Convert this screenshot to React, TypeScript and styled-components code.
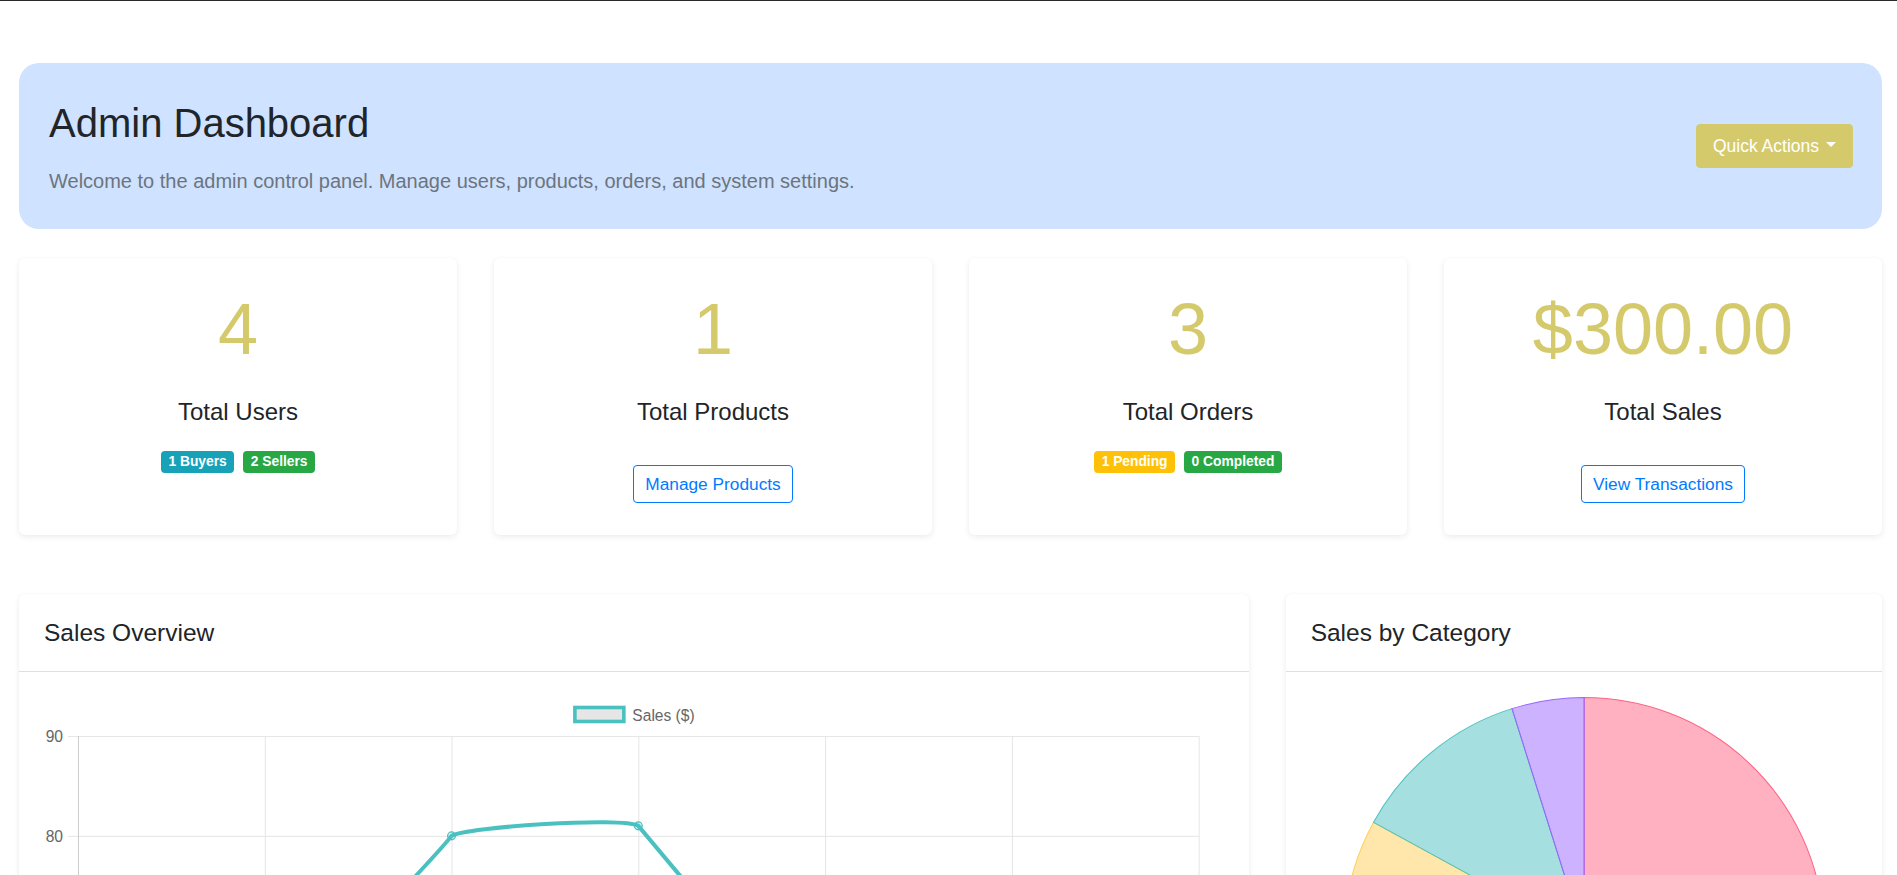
import React from "react";
import styled, { createGlobalStyle } from "styled-components";

const GlobalStyle = createGlobalStyle`
  *, *::before, *::after { box-sizing: border-box; }
  html, body { margin: 0; padding: 0; background: #ffffff; }
  body {
    font-family: "Liberation Sans", Arial, Helvetica, sans-serif;
    color: #212529;
    -webkit-font-smoothing: antialiased;
  }
`;

const OLIVE = "#d5ca6b";

const TopRule = styled.div`
  height: 1px;
  background: #2a2a2a;
`;

const Page = styled.main`
  padding: 62px 15px 40px 19px;
  display: flex;
  flex-direction: column;
`;

const Banner = styled.section`
  display: flex;
  align-items: center;
  justify-content: space-between;
  background: #cfe2ff;
  border-radius: 20px;
  padding: 36px 29px 33px 30px;
`;

const BannerText = styled.div`
  display: flex;
  flex-direction: column;
`;

const Title = styled.h1`
  margin: 0 0 19px;
  font-size: 40px;
  font-weight: 400;
  line-height: 48px;
  color: #212529;
`;

const Lead = styled.p`
  margin: 0;
  font-size: 20px;
  line-height: 30px;
  color: #6c757d;
`;

const DropdownButton = styled.button`
  font-family: inherit;
  font-size: 17.5px;
  line-height: 26px;
  padding: 8px 16px;
  margin-bottom: 4px;
  color: #ffffff;
  background: ${OLIVE};
  border: 1px solid ${OLIVE};
  border-radius: 4px;
  display: inline-flex;
  align-items: center;
  cursor: pointer;
  &::after {
    content: "";
    display: inline-block;
    margin-left: 7px;
    border-top: 5.5px solid #ffffff;
    border-left: 5px solid transparent;
    border-right: 5px solid transparent;
    transform: translateY(-1px);
  }
`;

const Grid = styled.div<{ $top: number }>`
  display: grid;
  grid-template-columns: repeat(12, minmax(0, 1fr));
  column-gap: 37px;
  margin-top: ${(p) => p.$top}px;
`;

const Col = styled.div<{ $span: number }>`
  grid-column: span ${(p) => p.$span};
  display: flex;
  min-width: 0;
`;

const StatCard = styled.div`
  flex: 1;
  background: #ffffff;
  border-radius: 6px;
  box-shadow: 0 2px 6px rgba(0, 0, 0, 0.08), 0 0 1px rgba(0, 0, 0, 0.04);
  padding: 28px 20px 32px;
  display: flex;
  flex-direction: column;
  align-items: center;
  text-align: center;
`;

const StatValue = styled.div`
  font-size: 72px;
  font-weight: 300;
  line-height: 86px;
  color: ${OLIVE};
  margin-bottom: 25px;
`;

const StatLabel = styled.h4`
  margin: 0;
  font-size: 24px;
  font-weight: 400;
  line-height: 29px;
  color: #212529;
`;

const StatFooter = styled.div<{ $top: number }>`
  margin-top: ${(p) => p.$top}px;
  display: flex;
  gap: 9px;
  justify-content: center;
`;

const Badge = styled.span<{ $bg: string }>`
  display: inline-block;
  background: ${(p) => p.$bg};
  color: #ffffff;
  font-size: 13.8px;
  font-weight: 700;
  line-height: 14px;
  padding: 4px 7.5px;
  border-radius: 4px;
`;

const OutlineButton = styled.button`
  font-family: inherit;
  font-size: 17.3px;
  line-height: 24px;
  padding: 6px 11px;
  color: #007bff;
  background: transparent;
  border: 1px solid #007bff;
  border-radius: 4px;
  cursor: pointer;
`;

const Panel = styled.div`
  flex: 1;
  background: #ffffff;
  border-radius: 6px;
  box-shadow: 0 2px 6px rgba(0, 0, 0, 0.08), 0 0 1px rgba(0, 0, 0, 0.04);
  display: flex;
  flex-direction: column;
  min-width: 0;
`;

const PanelHeader = styled.div`
  padding: 24px 25px 24px;
  border-bottom: 1px solid #dfdfdf;
`;

const PanelTitle = styled.h5`
  margin: 0;
  font-size: 24.5px;
  font-weight: 400;
  line-height: 29px;
  color: #212529;
`;

const PanelBody = styled.div`
  padding: 25px;
`;

const ChartSvg = styled.svg`
  display: block;
  width: 100%;
  height: auto;
  font-family: "Liberation Sans", Arial, Helvetica, sans-serif;
`;

const TEAL = "rgb(75,192,192)";

function LineChart() {
  const xs = [34, 221, 408, 595, 782, 969, 1156];
  const gridYs = [39, 139, 239, 339, 439];
  const labels = ["90", "80", "70", "60", "50"];
  const pts: [number, number][] = [
    [34, 299],
    [221, 336],
    [408, 139],
    [595, 129],
    [782, 353],
    [969, 329],
    [1156, 281],
  ];
  const path =
    "M34,299 C70,299 190,344 221,336 C240,319 393,159 408,139 C423,130 580,120 595,129 C610,147 767,334 782,353 C810,361 940,334 969,329 C1000,321 1120,289 1156,281";
  return (
    <ChartSvg viewBox="0 0 1181 460" width="1181" height="460">
      <rect x={531.5} y={10.5} width={49} height={14} fill="#e6e6e6" stroke={TEAL} strokeWidth={3.6} />
      <text x={589} y={24} fontSize={15.6} fill="#666666">
        Sales ($)
      </text>
      {gridYs.map((y, i) => (
        <g key={y}>
          <line x1={24} x2={1156} y1={y + 0.5} y2={y + 0.5} stroke="#e5e5e5" strokeWidth={1} />
          <text x={19} y={y + 6} fontSize={15.6} fill="#666666" textAnchor="end">
            {labels[i]}
          </text>
        </g>
      ))}
      {xs.map((x, i) => (
        <line
          key={x}
          x1={x + 0.5}
          x2={x + 0.5}
          y1={39}
          y2={460}
          stroke={i === 0 ? "#cccccc" : "#e5e5e5"}
          strokeWidth={1}
        />
      ))}
      <path d={path} fill="none" stroke={TEAL} strokeWidth={4} strokeLinejoin="round" />
      {pts.map(([x, y]) => (
        <circle key={x} cx={x} cy={y} r={3.9} fill="rgba(75,192,192,0.25)" stroke={TEAL} strokeWidth={1.3} />
      ))}
    </ChartSvg>
  );
}

const SLICES = [
  { from: 0, to: 172, fill: "rgba(255,99,132,0.5)", stroke: "rgb(255,99,132)" },
  { from: 172, to: 250, fill: "rgba(54,162,235,0.5)", stroke: "rgb(54,162,235)" },
  { from: 250, to: 298.7, fill: "rgba(255,206,86,0.5)", stroke: "rgb(255,206,86)" },
  { from: 298.7, to: 342.5, fill: "rgba(75,192,192,0.5)", stroke: "rgb(75,192,192)" },
  { from: 342.5, to: 360, fill: "rgba(153,102,255,0.5)", stroke: "rgb(153,102,255)" },
];

function slicePath(cx: number, cy: number, r: number, a0: number, a1: number) {
  const p = (a: number) => {
    const rad = (a * Math.PI) / 180;
    return [cx + r * Math.sin(rad), cy - r * Math.cos(rad)];
  };
  const [x0, y0] = p(a0);
  const [x1, y1] = p(a1);
  const large = a1 - a0 > 180 ? 1 : 0;
  return `M${cx},${cy} L${x0.toFixed(2)},${y0.toFixed(2)} A${r},${r} 0 ${large} 1 ${x1.toFixed(2)},${y1.toFixed(2)} Z`;
}

function PieChart() {
  const cx = 273;
  const cy = 240.5;
  const r = 240;
  return (
    <ChartSvg viewBox="0 0 546 484" width="546" height="484">
      {SLICES.map((s) => (
        <path key={s.from} d={slicePath(cx, cy, r, s.from, s.to)} fill={s.fill} stroke={s.stroke} strokeWidth={1} />
      ))}
    </ChartSvg>
  );
}

export default function App() {
  return (
    <>
      <GlobalStyle />
      <TopRule />
      <Page>
        <Banner>
          <BannerText>
            <Title>Admin Dashboard</Title>
            <Lead>Welcome to the admin control panel. Manage users, products, orders, and system settings.</Lead>
          </BannerText>
          <DropdownButton type="button">Quick Actions</DropdownButton>
        </Banner>

        <Grid $top={29}>
          <Col $span={3}>
            <StatCard>
              <StatValue>4</StatValue>
              <StatLabel>Total Users</StatLabel>
              <StatFooter $top={25}>
                <Badge $bg="#17a2b8">1 Buyers</Badge>
                <Badge $bg="#28a745">2 Sellers</Badge>
              </StatFooter>
            </StatCard>
          </Col>
          <Col $span={3}>
            <StatCard>
              <StatValue>1</StatValue>
              <StatLabel>Total Products</StatLabel>
              <StatFooter $top={39}>
                <OutlineButton type="button">Manage Products</OutlineButton>
              </StatFooter>
            </StatCard>
          </Col>
          <Col $span={3}>
            <StatCard>
              <StatValue>3</StatValue>
              <StatLabel>Total Orders</StatLabel>
              <StatFooter $top={25}>
                <Badge $bg="#ffc107">1 Pending</Badge>
                <Badge $bg="#28a745">0 Completed</Badge>
              </StatFooter>
            </StatCard>
          </Col>
          <Col $span={3}>
            <StatCard>
              <StatValue>$300.00</StatValue>
              <StatLabel>Total Sales</StatLabel>
              <StatFooter $top={39}>
                <OutlineButton type="button">View Transactions</OutlineButton>
              </StatFooter>
            </StatCard>
          </Col>
        </Grid>

        <Grid $top={59}>
          <Col $span={8}>
            <Panel>
              <PanelHeader>
                <PanelTitle>Sales Overview</PanelTitle>
              </PanelHeader>
              <PanelBody>
                <LineChart />
              </PanelBody>
            </Panel>
          </Col>
          <Col $span={4}>
            <Panel>
              <PanelHeader>
                <PanelTitle>Sales by Category</PanelTitle>
              </PanelHeader>
              <PanelBody>
                <PieChart />
              </PanelBody>
            </Panel>
          </Col>
        </Grid>
      </Page>
    </>
  );
}
